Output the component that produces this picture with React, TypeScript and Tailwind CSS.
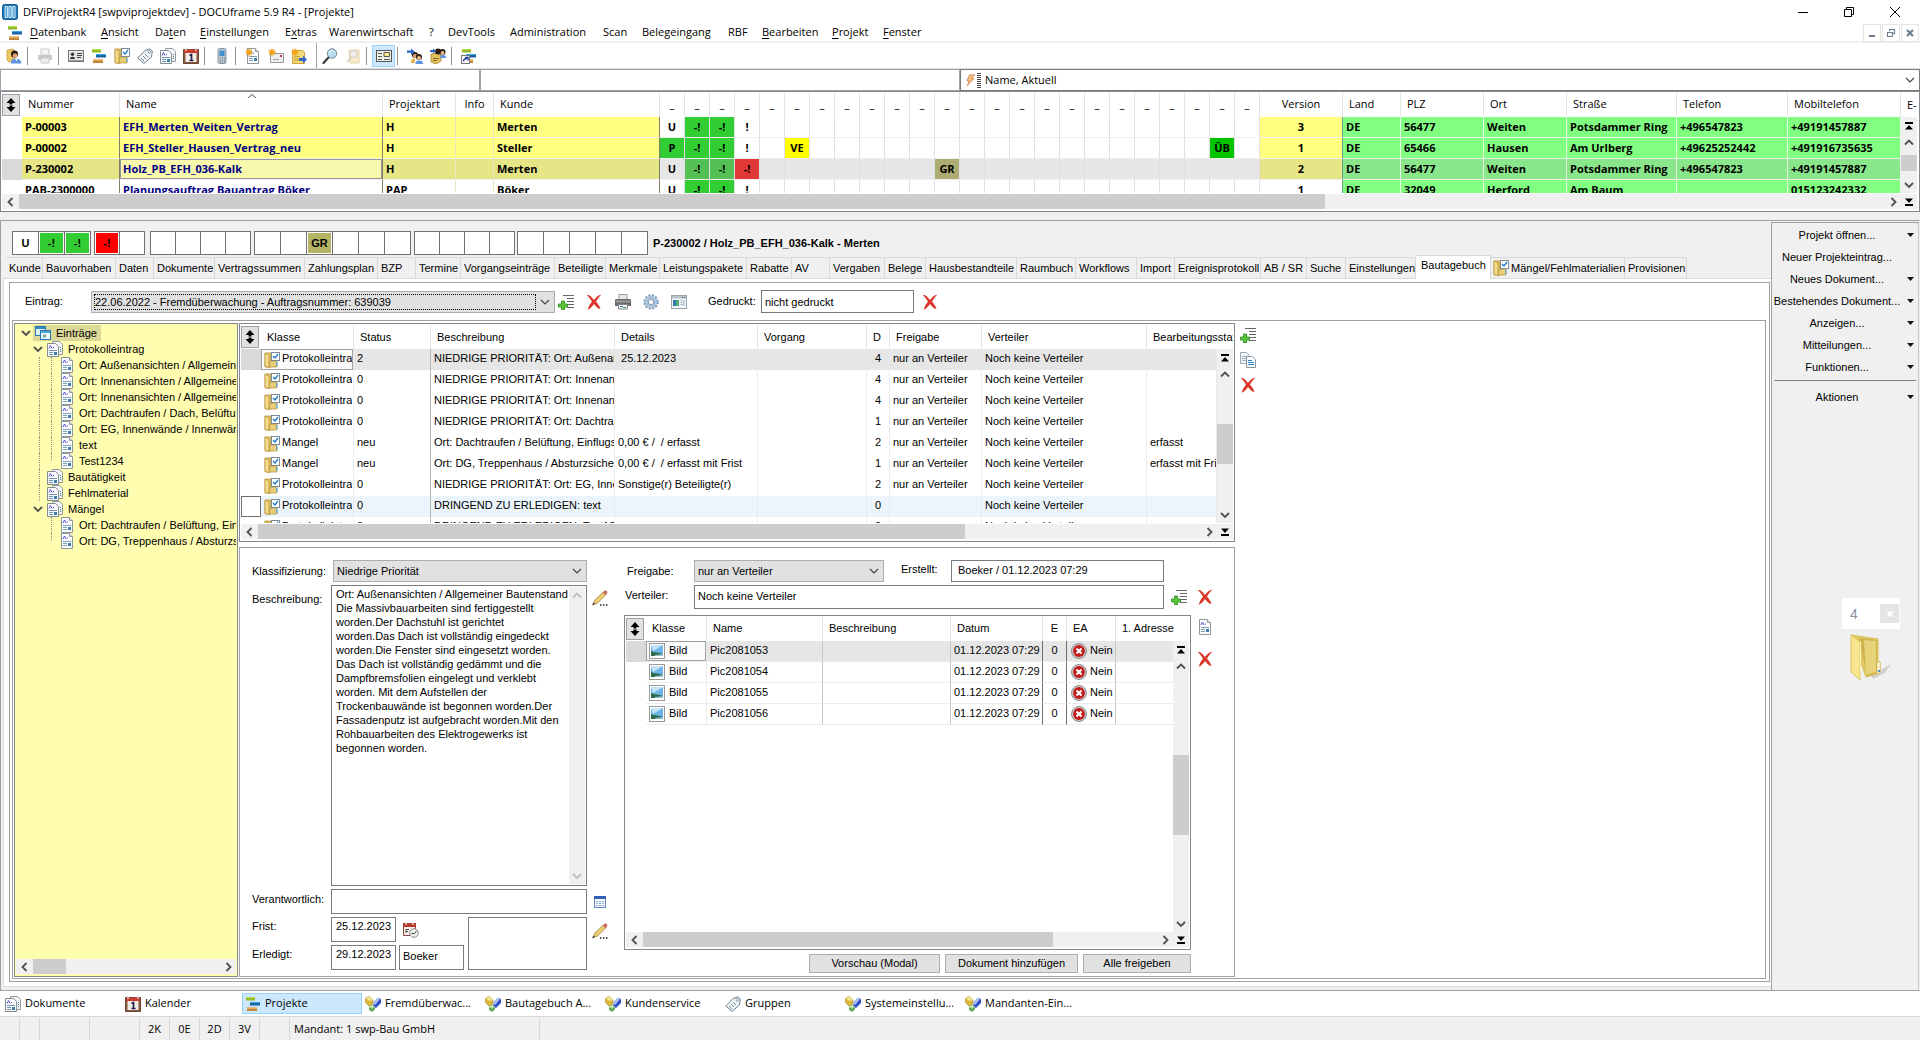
import type { ReactNode } from 'react';
import clsx from 'clsx';

const UI = "font-['Open_Sans','Noto_Sans',sans-serif]";
const SANS = "font-['Liberation_Sans',Arial,sans-serif]";

/* ---------- icons ---------- */

const PAGE = (
  <>
    <path d="M2.500 .5h8l3 3v12h-11z" fill="#fbfcfd" stroke="#8e979e" />
    <path d="M10.500 .5v3h3" fill="#dfe6ea" stroke="#8e979e" />
    <path d="M4 6l1.500-3L7 6M8 5h1" stroke="#5a4fd0" fill="none" />
    <path d="M4 8.500h8M4 10.500h4M4 12.500h4" stroke="#7d9fb0" />
    <path d="M9 10h3v3H9z" fill="#3d7fa8" />
  </>
);

const STAR = (
  <path
    d="M4 0l1 2.300L7.300 1 6.200 3.400 9 4 6.200 5 7.300 7.300 5 6.200 4 9 3 6.200 .7 7.300 1.800 5 0 4l1.800-.7L.7 1 3 2.200z"
    fill="#f2a51c"
  />
);

const BARS = (
  <>
    <path d="M1 1h9v3.500H1z" fill="#8fb92c" />
    <path d="M1 1h9v1.200H1z" fill="#b4dc3c" />
    <path d="M5 6h10v3.500H5z" fill="#1a5f9e" />
    <path d="M5 6h10v1.200H5z" fill="#35a3e0" />
    <path d="M2 11.500h10V15H2z" fill="#c2853a" />
    <path d="M2 11.500h10v1.200H2z" fill="#f0bd6c" />
  </>
);

const PEOPLE = (
  <>
    <circle cx="8" cy="7" r="3" fill="#2d1c12" />
    <circle cx="8" cy="8" r="2" fill="#e0a878" />
    <circle cx="12" cy="9" r="3" fill="#2d1c12" />
    <circle cx="12" cy="10" r="2" fill="#e8b88c" />
    <path d="M4 14c0-3 2-3.500 4-3.500V15H4z" fill="#e6b343" />
    <path d="M8.500 16c0-3 1.500-3.500 3.500-3.500s4 .5 4 3.500z" fill="#5f93e2" />
  </>
);

const icons: Record<string, ReactNode> = {
  app: (
    <>
      <rect x=".5" y=".5" width="15" height="15" rx="2" fill="#1c78b8" stroke="#135c92" />
      <path d="M3 2.500h2.500v11H3zM6.800 2.500h2.500v11H6.800zM10.600 2.500h2.500v11h-2.500z" fill="#5aa9dc" stroke="#e8f5fd" strokeWidth=".8" />
    </>
  ),
  gantt: BARS,
  userdb: (
    <>
      <path d="M1 2l6-1 2 2v10l-6 1-2-2z" fill="#ecc763" stroke="#c79a35" strokeWidth=".7" />
      <circle cx="8.500" cy="6" r="3.500" fill="#2c1b12" />
      <circle cx="9" cy="7.500" r="2.300" fill="#dda577" />
      <path d="M5 15.500c0-4 2-5 4.500-5s5.500 1 6 5z" fill="#5f93e2" />
      <path d="M9 10.500l1.500 3 1-3z" fill="#fff" />
    </>
  ),
  printerOff: (
    <>
      <path d="M4 1h8v6H4z" fill="#f6f6f6" stroke="#c8c8c8" />
      <path d="M1 7h14v5H1z" fill="#c9c9c9" />
      <path d="M4 10h8v5H4z" fill="#eee" stroke="#c8c8c8" />
    </>
  ),
  printer: (
    <>
      <path d="M4 .5h8V6H4z" fill="#e9e9e9" stroke="#9a9a9a" />
      <path d="M0 6c0-1 1-1 2-1h12c1 0 2 0 2 1v6H0z" fill="#6a6a6a" />
      <path d="M1 6.500h14v2H1z" fill="#9c9c9c" />
      <path d="M3.500 10.500h9V15h-9z" fill="#f4f4f4" stroke="#888" />
      <path d="M5 12.500h3" stroke="#2f7fc0" />
      <path d="M8 13.500h3" stroke="#4aa04a" />
    </>
  ),
  idcard: (
    <>
      <rect x=".5" y="2.500" width="15" height="11" fill="#e6e6e6" stroke="#777" />
      <circle cx="4.500" cy="6.300" r="1.700" fill="#333" />
      <path d="M2 11c0-3 5-3 5 0z" fill="#333" />
      <path d="M9 5.500h5M9 7.500h5M9 9.500h4" stroke="#444" />
      <path d="M1 12.500h14" stroke="#999" />
    </>
  ),
  folderCheck: (
    <>
      <path d="M1 1h6v14H1z" fill="#e5c466" stroke="#b28f35" strokeWidth=".7" />
      <path d="M1 1l4 2v13l-4-2z" fill="#f4dc8c" stroke="#b28f35" strokeWidth=".7" />
      <path d="M6 9h7v6H5z" fill="#e9cd77" stroke="#b28f35" strokeWidth=".7" />
      <path d="M12 10h1.500v4H12z" fill="#6aa9d6" />
      <rect x="7.500" y=".5" width="8" height="8" fill="#fff" stroke="#7b8c98" />
      <path d="M9 4l2 2 3-4" fill="none" stroke="#1c78c8" strokeWidth="1.300" />
    </>
  ),
  tag: (
    <>
      <path d="M8 2.500L13 .8l2.300 2.200-.8 6L7 15.500 .8 10z" fill="#eef3f7" stroke="#6f818e" />
      <circle cx="12.300" cy="3.800" r="1.300" fill="#fff" stroke="#6f818e" strokeWidth=".8" />
      <path d="M4 10l3 3M6 8l3 3M8 6l3 3" stroke="#77858f" />
    </>
  ),
  docs: (
    <>
      <path d="M5.500 .5h7l3 3v10h-10z" fill="#f3f5f6" stroke="#929aa0" />
      <path d="M.5 2.500h8l3 3v10H.5z" fill="#fbfcfd" stroke="#858d93" />
      <path d="M2 7.500L3.500 4.500 5 7.500M6 6.500h1" stroke="#5a4fd0" fill="none" />
      <path d="M2 9.500h8M2 11.500h4M2 13.500h4" stroke="#6f93a8" />
      <path d="M7 11h3v3H7z" fill="#3d7fa8" />
      <path d="M13 6.500h1M13 8.500h1M13 10.500h1" stroke="#3b7ea6" />
    </>
  ),
  calendar: (
    <>
      <path d="M.5 1.500h15v14H.5z" fill="#8a5a40" stroke="#6d4430" />
      <path d="M1 1.500h14V5H1z" fill="#c83e2e" />
      <path d="M3 0v3M13 0v3" stroke="#d8d8d8" strokeWidth="1.400" />
      <path d="M2.500 5h11v9h-11z" fill="#f3ece6" />
      <path d="M6.500 7.500L8.500 6.500v6M6.500 12.500h4" stroke="#1c1c50" strokeWidth="1.600" fill="none" />
    </>
  ),
  phone: (
    <>
      <rect x="4" y=".5" width="8" height="15" rx="1.500" fill="#bcc8d1" stroke="#8794a0" />
      <path d="M5.500 2.500h5V8h-5z" fill="#3f8ed0" />
      <path d="M6 10h1M8 10h1M10 10h1M6 12h1M8 12h1M10 12h1M6 14h1M8 14h1M10 14h1" stroke="#6b7883" />
    </>
  ),
  newDoc: (
    <>
      {PAGE}
      {STAR}
    </>
  ),
  newMail: (
    <>
      <path d="M2.500 5.500h13v9h-13z" fill="#eee" stroke="#999" />
      <path d="M12 7h2v2h-2z" fill="#cf3b3b" />
      <path d="M5 11.500h6" stroke="#aaa" />
      {STAR}
    </>
  ),
  pageArrow: (
    <>
      <path d="M1.500 2.500h10l2 2v11h-12z" fill="#f3d978" stroke="#cda53c" />
      <path d="M3 8.500h6M3 10.500h5M3 12.500h5" stroke="#c79f38" />
      <path d="M8 10h4V7.500l4 4-4 4V13H8z" fill="#3464c8" />
      {STAR}
    </>
  ),
  lens: (
    <>
      <path d="M6.500 9.500l-5 5.500" stroke="#3c3c3c" strokeWidth="2.200" strokeLinecap="round" />
      <circle cx="10" cy="5.500" r="4.700" fill="#b9dcf3" stroke="#6f8797" />
      <path d="M7.500 5c0-2 1.500-2.500 3-2.500" stroke="#fff" fill="none" />
    </>
  ),
  findPage: (
    <>
      <path d="M4 2h10v13H5z" fill="#f8e9c8" stroke="#e6d3a6" />
      <circle cx="8.500" cy="6" r="3.500" fill="#f1f1ee" stroke="#ccc" />
      <path d="M6 9l-4 5" stroke="#d5cfc0" strokeWidth="1.500" />
    </>
  ),
  form: (
    <>
      <rect x=".5" y="2.500" width="15" height="11" fill="#eef0e4" stroke="#555" />
      <path d="M2 5.500h4M2 8.500h4M2 11.500h4M8 11.500h6" stroke="#555" />
      <path d="M8 4.500h5.500v4H8z" fill="#f5e98a" stroke="#555" />
    </>
  ),
  users: (
    <>
      {PEOPLE}
      <path d="M0 2.500h4V.5l4 3.200-4 3.200V4.800H0z" fill="#2c66c9" />
    </>
  ),
  usersFolder: (
    <>
      <path d="M1 6l7-1 3 2v6l-5 3-5-2z" fill="#e3c05c" stroke="#a68432" strokeWidth=".8" />
      <circle cx="8" cy="3.500" r="3" fill="#2d1c12" />
      <circle cx="12.500" cy="4" r="3" fill="#2d1c12" />
      <circle cx="12.500" cy="5" r="1.900" fill="#e8b88c" />
      <path d="M10 10c0-2.500 1-3 3-3s3 1 3 3z" fill="#5f93e2" />
      <path d="M3 10.500h6M3 12.500h4" stroke="#8c6c22" />
      <path d="M0 2h3V.5l3 2.500-3 2.500V4H0z" fill="#2c66c9" />
    </>
  ),
  shortcut: (
    <>
      {BARS}
      <rect x=".5" y="7.500" width="8" height="8" fill="#fff" stroke="#777" />
      <path d="M2.500 13.500c0-2 1-3 3.500-3M4 9.500h3v3" stroke="#1c3f96" strokeWidth="1.400" fill="none" />
    </>
  ),
  bolt: (
    <path d="M6 1h7l-4 5h3L3 15.500 5.500 9H2.500z" fill="#f7c07c" stroke="#b5562a" strokeWidth=".7" />
  ),
  addList: (
    <>
      <path d="M5 1.500h11M9 4.500h7M9 7.500h7M9 10.500h7M9 13.500h7" stroke="#666" />
      <path d="M3.500 7h3v3h3v3h-3v3h-3v-3h-3v-3h3z" fill="#58c43a" stroke="#2c8a1c" strokeWidth=".8" />
    </>
  ),
  redX: (
    <path
      d="M.8 1C3.500 .6 5 2 8 6c2-3 4.500-5 7.500-5.500-3 3-4.500 5-5.500 7.300 2 2 3.500 4 4.500 7.200-3-.3-4.500-2.500-6.500-5C6.500 12 4.500 15 1.700 15.800c.8-3.300 2.300-5.800 4.300-8.300C4.300 5 2.800 3 .8 1z"
      fill="#d8372a"
    />
  ),
  gear: (
    <>
      <circle cx="8" cy="8" r="6.500" fill="none" stroke="#7f9cb8" strokeWidth="2.400" strokeDasharray="2.200 1.200" />
      <circle cx="8" cy="8" r="4.500" fill="none" stroke="#a9c2da" strokeWidth="3.200" />
      <circle cx="8" cy="8" r="2.700" fill="#fff" stroke="#7f9cb8" />
    </>
  ),
  windowApp: (
    <>
      <rect x=".5" y="1.500" width="15" height="13" fill="#f4f7f9" stroke="#98a4ae" />
      <path d="M1 2h14v2.500H1z" fill="#b8c4ce" />
      <path d="M11 3.500h1M13 3.500h1" stroke="#445" />
      <path d="M2 6h6v6H2z" fill="#2c7fae" />
      <path d="M5 6h3v6H5z" fill="#55a878" />
      <path d="M9.500 6.500h2M9.500 8.500h2M9.500 10.500h2M13 6v6" stroke="#9ab" />
    </>
  ),
  windows: (
    <>
      <rect x=".5" y="1.500" width="10" height="9" fill="#dff0fb" stroke="#2a78ad" />
      <path d="M1 2h9v2H1z" fill="#2f8ac6" />
      <rect x="5.500" y="5.500" width="10" height="9" fill="#eaf6fd" stroke="#2a78ad" />
      <path d="M6 6h9v2H6z" fill="#4fa5d8" />
      <path d="M8 9.500h3v3H8z" fill="#7fa7a0" />
    </>
  ),
  doc: PAGE,
  copy: (
    <>
      <path d="M.5 .5h6l3 3v8h-9z" fill="#f3f6f8" stroke="#9aa7b0" />
      <path d="M2 4.500h4M2 6.500h5M2 8.500h4" stroke="#8fb4cc" />
      <path d="M6.500 4.500h6l3 3v8h-9z" fill="#f9fbfc" stroke="#8794a0" />
      <path d="M8 8.500h4M8 10.500h6M8 12.500h6" stroke="#2f83c4" />
    </>
  ),
  pencil: (
    <>
      <path d="M1 14.500L3 10 11.500 2l2.500 2.500L5.500 13z" fill="#f0d070" stroke="#9a7b32" strokeWidth=".8" />
      <path d="M11 2.500L13 .8c1-.6 2.600.9 2 2L13.500 5z" fill="#e0685a" stroke="#9c6a64" strokeWidth=".6" />
      <path d="M0 15.500l1.500-3 1.500 1.500z" fill="#333" />
      <path d="M8 15h1.500M11 15h1.500M14 15h1.500" stroke="#222" strokeWidth="1.500" />
    </>
  ),
  calTable: (
    <>
      <rect x="2.500" y="2.500" width="11" height="11" fill="#f5f9fe" stroke="#5f86c4" />
      <path d="M2 2h12v3H2z" fill="#2f62b8" />
      <path d="M4 7.500h8M4 9.500h8M4 11.500h8" stroke="#8fb0dc" strokeDasharray="2 1" />
    </>
  ),
  calClock: (
    <>
      <path d="M.5 1.500h12v12H.5z" fill="#f6efec" stroke="#8d4a40" />
      <path d="M0 1h13v4H0z" fill="#b53a31" />
      <path d="M3 0v3M10 0v3" stroke="#ddd" strokeWidth="1.300" />
      <path d="M3 7v4M3 7.500h3M3 9.500h2" stroke="#555" />
      <circle cx="11" cy="11" r="4.300" fill="#efefec" stroke="#8d8d86" />
      <path d="M8.500 11.500h3L13.500 9" stroke="#444" fill="none" />
    </>
  ),
  picture: (
    <>
      <rect x=".5" y=".5" width="15" height="15" fill="#fff" stroke="#999" />
      <path d="M2 2h12v11H2z" fill="#6db4e8" />
      <path d="M2 2h12L4 8z" fill="#c5e4f8" />
      <path d="M2 8c3 2 8 1 12 3v2H2z" fill="#2c6b46" />
      <path d="M6 12l8-1v2H6z" fill="#8fc0d8" />
    </>
  ),
  error: (
    <>
      <circle cx="8" cy="8" r="7.500" fill="#c9c9c9" stroke="#777" strokeWidth=".8" />
      <circle cx="8" cy="8" r="5.900" fill="#c41a1a" />
      <path d="M5.500 5.500l5 5M10.500 5.500l-5 5" stroke="#fff" strokeWidth="2.200" />
    </>
  ),
  cubes: (
    <>
      <path d="M4 .5L8 4 7 9 4 10 0 6 1 2z" fill="#dcb93c" stroke="#9c7f22" strokeWidth=".6" />
      <path d="M4 .5L8 4 4 5 1 2z" fill="#f7e48e" />
      <path d="M13 2l3 1v4l-5 5-3-2 .5-4z" fill="#3450c8" />
      <path d="M13 2l2 1-5 6-2-1 .5-2z" fill="#a9c0f4" />
      <path d="M7 9.500l3 1v3L7 16l-3-2v-3z" fill="#6aa85a" />
      <path d="M7 9.500l3 1-3 2-3-1.500z" fill="#c6e8ba" />
    </>
  ),
};

function Icon({ name, className }: { name: string; className?: string }) {
  return (
    <svg viewBox="0 0 16 16" className={clsx('h-4 shrink-0', className ?? 'w-4')} aria-hidden="true">
      {icons[name]}
    </svg>
  );
}

type ChevronProps = { dir: 'up' | 'down' | 'left' | 'right'; className?: string; thin?: boolean };

function Chevron({ dir, className, thin }: ChevronProps) {
  const paths = {
    up: 'M1 6.500L5 2.500l4 4',
    down: 'M1 3l4 4 4-4',
    left: 'M6.500 1l-4 4 4 4',
    right: 'M3.500 1l4 4-4 4',
  };
  return (
    <svg viewBox="0 0 10 10" className={clsx('size-2.5 shrink-0', className ?? 'text-[#505050]')} aria-hidden="true">
      <path d={paths[dir]} fill="none" stroke="currentColor" strokeWidth={thin ? 1.1 : 1.8} />
    </svg>
  );
}

function EndMark({ top }: { top?: boolean }) {
  return (
    <svg viewBox="0 0 8 8" className="size-2 shrink-0" aria-hidden="true">
      <path d={top ? 'M0 0h8v2H0zM4 3l4 4.500H0z' : 'M0 6h8v2H0zM4 5L0 .5h8z'} fill="#000" />
    </svg>
  );
}

/* ---------- shared controls ---------- */

function IconButton({ name, label, className }: { name: string; label: string; className?: string }) {
  return (
    <button type="button" aria-label={label} className={clsx('flex size-4 items-center justify-center', className)}>
      <Icon name={name} />
    </button>
  );
}

type ScrollProps = { parts: [number, number, number]; ends?: boolean };

function HScroll({ parts, ends }: ScrollProps) {
  const [before, size, after] = parts;
  return (
    <div className="flex h-[15px] shrink-0 items-center bg-[#f0f0f0]">
      <span className="flex w-[17px] justify-center">
        <Chevron dir="left" />
      </span>
      <span className="flex h-full flex-1">
        <span style={{ flexGrow: before }} />
        <span className="bg-[#cdcdcd]" style={{ flexGrow: size }} />
        <span style={{ flexGrow: after }} />
      </span>
      <span className="flex w-[17px] justify-center">
        <Chevron dir="right" />
      </span>
      {ends && (
        <span className="flex w-4 justify-center">
          <EndMark />
        </span>
      )}
    </div>
  );
}

function VScroll({ parts, ends, disabled }: ScrollProps & { disabled?: boolean }) {
  const [before, size, after] = parts;
  const tone = disabled ? 'text-[#bfbfbf]' : 'text-[#505050]';
  return (
    <div className="flex min-h-0 w-4 flex-1 flex-col items-center bg-[#f0f0f0]">
      {ends && (
        <span className="flex h-[17px] items-center">
          <EndMark top />
        </span>
      )}
      <span className="flex h-[17px] items-center">
        <Chevron dir="up" className={tone} />
      </span>
      <span className="flex min-h-0 w-full flex-1 flex-col">
        <span style={{ flexGrow: before }} />
        <span className="bg-[#cdcdcd]" style={{ flexGrow: size }} />
        <span style={{ flexGrow: after }} />
      </span>
      <span className="flex h-[17px] items-center">
        <Chevron dir="down" className={tone} />
      </span>
    </div>
  );
}

function Sorter() {
  return (
    <button
      type="button"
      aria-label="Zeilenhöhe"
      className="flex h-[22px] w-[18px] items-center justify-center border border-[#a0a0a0] bg-[#e1e1e1]"
    >
      <svg viewBox="0 0 10 14" className="h-3.5 w-2.5" aria-hidden="true">
        <path d="M5 0l4.500 5h-3v4h3L5 14 .5 9h3V5h-3z" fill="#000" />
        <path d="M.5 7h9" stroke="#e1e1e1" />
      </svg>
    </button>
  );
}

function Dropdown({ id, value, className, focus }: { id: string; value: string; className?: string; focus?: boolean }) {
  return (
    <span className={clsx('relative flex h-[22px] shrink-0 items-center border border-[#adadad] bg-[#e1e1e1]', className)}>
      <select
        id={id}
        className={clsx(
          'h-4 flex-1 appearance-none',
          focus ? 'ml-[2px] mr-[18px] border border-dotted border-black leading-[14px]' : 'pl-[3px] leading-4',
        )}
      >
        <option>{value}</option>
      </select>
      <Chevron dir="down" thin className="pointer-events-none absolute right-1 text-[#404040]" />
    </span>
  );
}

const FIELD = 'border border-[#7a7a7a] bg-white outline-none';

/* ---------- window chrome ---------- */

const menu: { text: string; key?: number; width: string }[] = [
  { text: 'Datenbank', key: 0, width: 'w-[71px]' },
  { text: 'Ansicht', key: 0, width: 'w-[54px]' },
  { text: 'Daten', key: 2, width: 'w-[45px]' },
  { text: 'Einstellungen', key: 0, width: 'w-[85px]' },
  { text: 'Extras', key: 1, width: 'w-[44px]' },
  { text: 'Warenwirtschaft', width: 'w-[100px]' },
  { text: '?', width: 'w-[19px]' },
  { text: 'DevTools', width: 'w-[62px]' },
  { text: 'Administration', width: 'w-[93px]' },
  { text: 'Scan', width: 'w-[39px]' },
  { text: 'Belegeingang', width: 'w-[86px]' },
  { text: 'RBF', width: 'w-[34px]' },
  { text: 'Bearbeiten', key: 0, width: 'w-[70px]' },
  { text: 'Projekt', key: 0, width: 'w-[51px]' },
  { text: 'Fenster', key: 0, width: 'w-[50px]' },
];

function TitleBar() {
  return (
    <header className="flex h-6 shrink-0 items-center pl-[2px]">
      <Icon name="app" />
      <h1 className="ml-[5px] flex-1">DFViProjektR4 [swpviprojektdev] - DOCUframe 5.9 R4 - [Projekte]</h1>
      <button type="button" aria-label="Minimieren" className="flex w-[46px] justify-center">
        <svg viewBox="0 0 10 10" className="size-2.5" stroke="#000">
          <path d="M0 5.500h10" />
        </svg>
      </button>
      <button type="button" aria-label="Verkleinern" className="flex w-[46px] justify-center">
        <svg viewBox="0 0 10 10" className="size-2.5" stroke="#000" fill="none">
          <path d="M.5 2.500h7v7h-7zM2.500 2.500v-2h7v7h-2" />
        </svg>
      </button>
      <button type="button" aria-label="Schließen" className="mr-[2px] flex w-[46px] justify-center">
        <svg viewBox="0 0 10 10" className="size-2.5" stroke="#000">
          <path d="M0 0l10 10M10 0L0 10" />
        </svg>
      </button>
    </header>
  );
}

function MenuBar() {
  const box = 'flex size-[18px] items-center justify-center border border-[#e5e5e5] text-[#6d7f92]';
  return (
    <nav className="flex h-[19px] shrink-0 items-center border-b-2 border-[#f0f0f0] pl-[7px]">
      <Icon name="gantt" />
      <span className="w-[7px]" />
      {menu.map(({ text, key, width }) => (
        <button key={text} type="button" className={clsx('text-left whitespace-nowrap', width)}>
          {key === undefined ? (
            text
          ) : (
            <>
              {text.slice(0, key)}
              <u className="underline-offset-2">{text[key]}</u>
              {text.slice(key + 1)}
            </>
          )}
        </button>
      ))}
      <span className="flex-1" />
      <span className="flex gap-px pr-px">
        <button type="button" aria-label="Fenster minimieren" className={box}>
          <svg viewBox="0 0 10 10" className="size-2.5">
            <path d="M2 7h6v2H2z" fill="currentColor" />
          </svg>
        </button>
        <button type="button" aria-label="Fenster wiederherstellen" className={box}>
          <svg viewBox="0 0 10 10" className="size-2.5" fill="none" stroke="currentColor">
            <path d="M1.500 4.500h5v4h-5zM3.500 3V1.500h5v4H7" strokeWidth="1.200" />
          </svg>
        </button>
        <button type="button" aria-label="Fenster schließen" className={box}>
          <svg viewBox="0 0 10 10" className="size-2.5" stroke="currentColor" strokeWidth="2.200">
            <path d="M2 2l6 6M8 2L2 8" />
          </svg>
        </button>
      </span>
    </nav>
  );
}

const toolbar = [
  ['userdb', 'Benutzer'],
  ['|', ''],
  ['printerOff', 'Drucken'],
  ['|', ''],
  ['idcard', 'Adressen'],
  ['gantt', 'Projekte'],
  ['folderCheck', 'Vorgänge'],
  ['tag', 'Gruppen'],
  ['docs', 'Dokumente'],
  ['calendar', 'Kalender'],
  ['|', ''],
  ['phone', 'Telefon'],
  ['|', ''],
  ['newDoc', 'Neues Dokument'],
  ['newMail', 'Neue Mail'],
  ['pageArrow', 'Neue Notiz'],
  ['||', ''],
  ['lens', 'Suchen'],
  ['findPage', 'Suche im Ordner'],
  ['|', ''],
  ['form', 'Formular'],
  ['|', ''],
  ['users', 'Verteiler'],
  ['usersFolder', 'Mappe'],
  ['|', ''],
  ['shortcut', 'Verknüpfung'],
];

function Toolbar() {
  return (
    <div className="flex h-[26px] shrink-0 items-center border-b border-[#dcdcdc] pl-[2px]">
      {toolbar.map(([name, label], i) => {
        if (name === '|') {
          return <span key={i} className="ml-[2px] mr-[5px] h-[18px] w-px bg-[#8f8f8f]" />;
        }
        if (name === '||') {
          return <span key={i} className="ml-[6px] mr-px h-full w-px bg-[#a0a0a0]" />;
        }
        return (
          <button
            key={i}
            type="button"
            aria-label={label}
            className={clsx(
              'flex h-[22px] w-[23px] items-center justify-center',
              name === 'form' && 'border border-[#99d1ff] bg-[#cce8ff]',
            )}
          >
            <Icon name={name} />
          </button>
        );
      })}
    </div>
  );
}

function SearchRow() {
  return (
    <div className="flex h-[22px] shrink-0">
      <input aria-label="Suche Nummer" className="w-1/4 border border-[#a0a0a5] outline-none" />
      <input aria-label="Suche Name" className="w-1/4 border border-[#a0a0a5] outline-none" />
      <div className="relative flex w-1/2 items-center border border-[#7a7a7a] pl-1">
        <Icon name="bolt" className="w-3" />
        <svg viewBox="0 0 4 15" className="h-[15px] w-1" aria-hidden="true">
          <path d="M0 .5h4M0 2.500h4M0 4.500h4M0 6.500h4M0 8.500h4M0 10.500h4M0 12.500h4M0 14.500h4" stroke="#444" />
        </svg>
        <select aria-label="Sortierung" className="ml-1 flex-1 appearance-none">
          <option>Name, Aktuell</option>
        </select>
        <Chevron dir="down" thin className="pointer-events-none absolute right-1 text-[#404040]" />
      </div>
    </div>
  );
}

/* ---------- project list ---------- */

const STATE_COUNT = 24;

const tones: Record<string, string> = {
  green: 'bg-[#32cd32]',
  greenSel: 'bg-[#55c155]',
  redSel: 'bg-[#e03737]',
  yellow: 'bg-[#ffff00]',
  olive: 'bg-[#acac73]',
  deep: 'bg-[#00c400]',
};

type Project = {
  no: string;
  name: string;
  kind: string;
  customer: string;
  states: Record<number, [string, string?]>;
  rest: string[];
  plain?: boolean;
  selected?: boolean;
};

const projects: Project[] = [
  {
    no: 'P-00003',
    name: 'EFH_Merten_Weiten_Vertrag',
    kind: 'H',
    customer: 'Merten',
    states: { 0: ['U'], 1: ['-!', 'green'], 2: ['-!', 'green'], 3: ['!'] },
    rest: ['3', 'DE', '56477', 'Weiten', 'Potsdammer Ring', '+496547823', '+49191457887'],
  },
  {
    no: 'P-00002',
    name: 'EFH_Steller_Hausen_Vertrag_neu',
    kind: 'H',
    customer: 'Steller',
    states: {
      0: ['P', 'green'],
      1: ['-!', 'green'],
      2: ['-!', 'green'],
      3: ['!'],
      5: ['VE', 'yellow'],
      22: ['ÜB', 'deep'],
    },
    rest: ['1', 'DE', '65466', 'Hausen', 'Am Urlberg', '+49625252442', '+491916735635'],
  },
  {
    no: 'P-230002',
    name: 'Holz_PB_EFH_036-Kalk',
    kind: 'H',
    customer: 'Merten',
    states: { 0: ['U'], 1: ['-!', 'greenSel'], 2: ['-!', 'greenSel'], 3: ['-!', 'redSel'], 11: ['GR', 'olive'] },
    rest: ['2', 'DE', '56477', 'Weiten', 'Potsdammer Ring', '+496547823', '+49191457887'],
    selected: true,
  },
  {
    no: 'PAB-2300000',
    name: 'Planungsauftrag Bauantrag Böker',
    kind: 'PAP',
    customer: 'Böker',
    states: { 0: ['U'], 1: ['-!', 'green'], 2: ['-!', 'green'], 3: ['!'] },
    rest: ['1', 'DE', '32049', 'Herford', 'Am Baum', '', '015123242332'],
    plain: true,
  },
];

function ProjectRow({ project }: { project: Project }) {
  const { no, name, kind, customer, states, rest, plain, selected } = project;
  const left = plain ? 'bg-white' : selected ? 'bg-[#e6e686]' : 'bg-[#ffff80]';
  const right = selected ? 'bg-[#8ae68a]' : 'bg-[#80ff80]';
  const cell = 'h-[21px] border-b border-r border-b-[#f0f0f0] p-0 whitespace-nowrap leading-5';
  const [version, ...address] = rest;

  return (
    <tr>
      <td className={clsx('h-[21px] p-0', selected && 'bg-[#d9d9d9]')} />
      <td className={clsx(cell, left, 'border-r-[#80806a] pl-[3px]')}>{no}</td>
      <td className={clsx(cell, 'border-r-[#80806a] text-[#000080]', left)}>
        {selected ? (
          <div className="h-5 border border-[#989898] bg-[#f9f9ae] pl-[2px] leading-[18px]">{name}</div>
        ) : (
          <div className="pl-[3px]">{name}</div>
        )}
      </td>
      <td className={clsx(cell, left, 'border-r-[#e8e8c0] pl-[3px]')}>{kind}</td>
      <td className={clsx(cell, left, 'border-r-[#e8e8c0]')} />
      <td className={clsx(cell, left, 'border-r-[#80806a] pl-[3px]')}>{customer}</td>
      {Array.from({ length: STATE_COUNT }, (_, i) => {
        const [text, tone] = states[i] ?? [''];
        return (
          <td
            key={i}
            className={clsx(cell, 'border-r-[#e0e0e6] text-center', tone ? tones[tone] : selected && 'bg-[#e6e6e6]')}
          >
            {text}
          </td>
        );
      })}
      <td className={clsx(cell, left, 'border-r-[#6d9a8a] text-center')}>{version}</td>
      {address.map((text, i) => (
        <td key={i} className={clsx(cell, right, 'border-r-[#e6f5e6] pl-[3px]')}>
          {text}
        </td>
      ))}
    </tr>
  );
}

function ProjectList() {
  const th = 'h-[25px] border-r border-[#e5e5e5] p-0 pl-[6px] text-left font-normal whitespace-nowrap';
  return (
    <section className="flex h-[121px] shrink-0 flex-col border border-[#828790] pb-[2px] pl-px pr-[2px]">
      <div className="mb-px flex min-h-0 flex-1 overflow-hidden">
        <div className="relative min-w-0 flex-1">
          <table className="w-full table-fixed border-separate border-spacing-0">
            <colgroup>
              <col className="w-5" />
              <col className="w-[98px]" />
              <col className="w-[263px]" />
              <col className="w-[73px]" />
              <col className="w-[38px]" />
              <col className="w-[166px]" />
              {Array.from({ length: STATE_COUNT }, (_, i) => (
                <col key={i} className="w-[25px]" />
              ))}
              <col className="w-[83px]" />
              <col className="w-[58px]" />
              <col className="w-[83px]" />
              <col className="w-[83px]" />
              <col className="w-[110px]" />
              <col className="w-[111px]" />
              <col />
            </colgroup>
            <thead>
              <tr>
                <th className="p-0">
                  <Sorter />
                </th>
                <th className={th}>Nummer</th>
                <th className={th}>Name</th>
                <th className={th}>Projektart</th>
                <th className="border-r border-[#e5e5e5] p-0 text-center font-normal">Info</th>
                <th className={th}>Kunde</th>
                {Array.from({ length: STATE_COUNT }, (_, i) => (
                  <th key={i} className="border-r border-[#e5e5e5] p-0 text-center">
                    _
                  </th>
                ))}
                <th className="border-r border-[#e5e5e5] p-0 text-center font-normal">Version</th>
                {['Land', 'PLZ', 'Ort', 'Straße', 'Telefon', 'Mobiltelefon'].map((text) => (
                  <th key={text} className={th}>
                    {text}
                  </th>
                ))}
              </tr>
            </thead>
            <tbody className="font-bold">
              {projects.map((project) => (
                <ProjectRow key={project.no} project={project} />
              ))}
            </tbody>
          </table>
          <svg viewBox="0 0 8 4" className="absolute left-[246px] top-[2px] h-1 w-2" aria-hidden="true">
            <path d="M0 4l4-3.500L8 4" fill="none" stroke="#555" />
          </svg>
        </div>
        <div className="flex w-4 shrink-0 flex-col">
          <div className="h-[25px] overflow-hidden pl-[6px] leading-[25px]">E-</div>
          <VScroll parts={[4, 17, 5]} ends />
        </div>
      </div>
      <HScroll parts={[0, 70, 30]} ends />
    </section>
  );
}

/* ---------- project header and tabs ---------- */

type Chip = [string, string?];
const none: Chip = [''];

const chipGroups: { chips: Chip[]; width: string; gap: string }[] = [
  { chips: [['U'], ['-!', 'bg-[#32cd32]'], ['-!', 'bg-[#32cd32]']], width: 'w-[27px]', gap: 'mr-[3px]' },
  { chips: [['-!', 'bg-[#ff0000]'], none], width: 'w-[26px]', gap: 'mr-[5px]' },
  { chips: [none, none, none, none], width: 'w-[26px]', gap: 'mr-[3px]' },
  { chips: [none, none, ['GR', 'bg-[#b4b464]'], none, none, none], width: 'w-[27px]', gap: 'mr-[3px]' },
  { chips: [none, none, none, none], width: 'w-[26px]', gap: 'mr-[2px]' },
  { chips: [none, none, none, none, none], width: 'w-[27px]', gap: 'mr-[5px]' },
];

function StatusChips() {
  return (
    <div className="flex h-6 shrink-0 items-center pl-[11px] font-bold">
      {chipGroups.map(({ chips, width, gap }, g) => (
        <div key={g} className={clsx('flex', gap)}>
          {chips.map(([text, tone], i) => (
            <span
              key={i}
              className={clsx('flex h-6 border border-[#707070] bg-white p-px', width, i > 0 && '-ml-px')}
            >
              <span className={clsx('flex flex-1 items-center justify-center', tone)}>{text}</span>
            </span>
          ))}
        </div>
      ))}
      <h2>P-230002 / Holz_PB_EFH_036-Kalk - Merten</h2>
    </div>
  );
}

const tabs: [string, string][] = [
  ['Kunde', 'w-[37px]'],
  ['Bauvorhaben', 'w-[73px]'],
  ['Daten', 'w-[38px]'],
  ['Dokumente', 'w-[61px]'],
  ['Vertragssummen', 'w-[90px]'],
  ['Zahlungsplan', 'w-[73px]'],
  ['BZP', 'w-[38px]'],
  ['Termine', 'w-[45px]'],
  ['Vorgangseinträge', 'w-[94px]'],
  ['Beteiligte', 'w-[51px]'],
  ['Merkmale', 'w-[54px]'],
  ['Leistungspakete', 'w-[87px]'],
  ['Rabatte', 'w-[45px]'],
  ['AV', 'w-[38px]'],
  ['Vergaben', 'w-[55px]'],
  ['Belege', 'w-[41px]'],
  ['Hausbestandteile', 'w-[91px]'],
  ['Raumbuch', 'w-[59px]'],
  ['Workflows', 'w-[61px]'],
  ['Import', 'w-[38px]'],
  ['Ereignisprotokoll', 'w-[86px]'],
  ['AB / SR', 'w-[46px]'],
  ['Suche', 'w-[39px]'],
  ['Einstellungen', 'w-[70px]'],
  ['Bautagebuch', 'w-[75px]'],
  ['Mängel/Fehlmaterialien', 'w-[134px]'],
  ['Provisionen', 'w-[62px]'],
];

function TabStrip() {
  return (
    <div role="tablist" className="ml-[2px] flex h-6 shrink-0 items-end border-b border-[#dcdcdc] pl-[3px]">
      {tabs.map(([text, width]) => {
        const active = text === 'Bautagebuch';
        const withIcon = text.startsWith('Mängel');
        return (
          <button
            key={text}
            type="button"
            role="tab"
            aria-selected={active}
            className={clsx(
              'flex shrink-0 items-center justify-start border-r border-t border-[#d9d9d9] whitespace-nowrap',
              width,
              active ? '-mb-px h-6 bg-white pb-1 pl-[5px]' : 'h-[21px]',
              !active && (withIcon ? 'gap-[2px] pl-[2px]' : 'pl-[3px]'),
            )}
          >
            {withIcon && <Icon name="folderCheck" />}
            {text}
          </button>
        );
      })}
    </div>
  );
}

/* ---------- diary page ---------- */

function EntryBar() {
  return (
    <div className="flex h-[37px] shrink-0 items-center pl-[13px]">
      <label htmlFor="entry" className="w-[66px]">
        Eintrag:
      </label>
      <Dropdown id="entry" value="22.06.2022 - Fremdüberwachung - Auftragsnummer: 639039" className="w-[464px]" focus />
      <IconButton name="addList" label="Eintrag hinzufügen" className="ml-[3px]" />
      <IconButton name="redX" label="Eintrag löschen" className="ml-3" />
      <IconButton name="printer" label="Drucken" className="ml-[13px]" />
      <IconButton name="gear" label="Einstellungen" className="ml-3" />
      <IconButton name="windowApp" label="Ansicht" className="ml-3" />
      <label htmlFor="printed" className="ml-[21px] w-[53px]">
        Gedruckt:
      </label>
      <input id="printed" defaultValue="nicht gedruckt" className={clsx(FIELD, 'h-[23px] w-[153px] pl-[3px]')} />
      <IconButton name="redX" label="Gedruckt zurücksetzen" className="ml-2" />
    </div>
  );
}

type Node = { text: string; icon: string; level: 0 | 1 | 2; open?: boolean; last?: boolean; trunk?: boolean };

const tree: Node[] = [
  { text: 'Einträge', icon: 'windows', level: 0, open: true },
  { text: 'Protokolleintrag', icon: 'docs', level: 1, open: true },
  { text: 'Ort: Außenansichten / Allgemein', icon: 'doc', level: 2, trunk: true },
  { text: 'Ort: Innenansichten / Allgemeine', icon: 'doc', level: 2, trunk: true },
  { text: 'Ort: Innenansichten / Allgemeine', icon: 'doc', level: 2, trunk: true },
  { text: 'Ort: Dachtraufen / Dach, Belüftu', icon: 'doc', level: 2, trunk: true },
  { text: 'Ort: EG, Innenwände / Innenwär', icon: 'doc', level: 2, trunk: true },
  { text: 'text', icon: 'doc', level: 2, trunk: true },
  { text: 'Test1234', icon: 'doc', level: 2, trunk: true, last: true },
  { text: 'Bautätigkeit', icon: 'docs', level: 1 },
  { text: 'Fehlmaterial', icon: 'docs', level: 1 },
  { text: 'Mängel', icon: 'docs', level: 1, open: true },
  { text: 'Ort: Dachtraufen / Belüftung, Ein', icon: 'doc', level: 2 },
  { text: 'Ort: DG, Treppenhaus / Absturzs', icon: 'doc', level: 2, last: true },
];

function TreeRow({ node }: { node: Node }) {
  const { text, icon, level, open, last, trunk } = node;
  return (
    <li className="flex h-4 items-center whitespace-nowrap">
      {level > 0 && <span className="w-3 shrink-0" />}
      {level === 2 && (
        <span
          className={clsx(
            'ml-[9px] h-full w-3 shrink-0 border-l border-dotted',
            trunk ? 'border-[#909080]' : 'border-transparent',
          )}
        />
      )}
      {open ? (
        <span className="flex w-[15px] shrink-0 justify-center">
          <Chevron dir="down" />
        </span>
      ) : (
        <span
          className={clsx(
            'shrink-0 border-l border-dotted border-[#909080]',
            last ? 'mb-2 h-2' : 'h-full',
            level === 1 ? 'ml-[9px] w-[6px]' : 'w-[8px]',
          )}
        />
      )}
      {level === 0 ? (
        <span className="flex items-center gap-[5px] bg-[#dbd898] pl-[2px] pr-1">
          <Icon name={icon} />
          {text}
        </span>
      ) : (
        <span className={clsx('flex items-center', level === 1 ? 'gap-[5px] pl-[2px]' : 'gap-1')}>
          <Icon name={icon} />
          {text}
        </span>
      )}
    </li>
  );
}

function EntryTree() {
  return (
    <div className="flex w-[224px] shrink-0 flex-col border border-[#828790] bg-[#fffdb0] px-px pb-[2px] pt-px">
      <ul className="min-h-0 flex-1 overflow-hidden pl-[2px]">
        {tree.map((node, i) => (
          <TreeRow key={i} node={node} />
        ))}
      </ul>
      <HScroll parts={[0, 18, 82]} />
    </div>
  );
}

const RELEASE = 'nur an Verteiler';
const NOBODY = 'Noch keine Verteiler';

const entries: string[][] = [
  ['Protokolleintra', '2', 'NIEDRIGE PRIORITÄT: Ort: Außenans', ' 25.12.2023', '', '4', RELEASE, NOBODY, ''],
  ['Protokolleintra', '0', 'NIEDRIGE PRIORITÄT: Ort: Innenansic', '', '', '4', RELEASE, NOBODY, ''],
  ['Protokolleintra', '0', 'NIEDRIGE PRIORITÄT: Ort: Innenansic', '', '', '4', RELEASE, NOBODY, ''],
  ['Protokolleintra', '0', 'NIEDRIGE PRIORITÄT: Ort: Dachtraufe', '', '', '1', RELEASE, NOBODY, ''],
  ['Mangel', 'neu', 'Ort: Dachtraufen / Belüftung, Einflugs', '0,00 € /  / erfasst', '', '2', RELEASE, NOBODY, 'erfasst'],
  ['Mangel', 'neu', 'Ort: DG, Treppenhaus / Absturzsiche', '0,00 € /  / erfasst mit Frist', '', '1', RELEASE, NOBODY, 'erfasst mit Fri'],
  ['Protokolleintra', '0', 'NIEDRIGE PRIORITÄT: Ort: EG, Innenw', 'Sonstige(r) Beteiligte(r)', '', '2', RELEASE, NOBODY, ''],
  ['Protokolleintra', '0', 'DRINGEND ZU ERLEDIGEN: text', '', '', '0', '', NOBODY, ''],
  ['Protokolleintra', '0', 'DRINGEND ZU ERLEDIGEN: Test1234', '', '', '0', '', NOBODY, ''],
];

function EntryTable() {
  const th = 'h-6 border-r border-[#e5e5e5] p-0 pl-[6px] text-left font-normal whitespace-nowrap';
  const td = 'h-[21px] border-r p-0 pb-[2px] leading-[19px]';
  return (
    <div className="flex h-[219px] shrink-0 flex-col border border-[#828790] px-px pb-[2px] pt-px">
      <div className="mb-px flex min-h-0 flex-1 overflow-hidden">
        <table className="w-full min-w-0 flex-1 table-fixed border-separate border-spacing-0">
          <colgroup>
            <col className="w-5" />
            <col className="w-[93px]" />
            <col className="w-[77px]" />
            <col className="w-[184px]" />
            <col className="w-[143px]" />
            <col className="w-[109px]" />
            <col className="w-[23px]" />
            <col className="w-[92px]" />
            <col className="w-[165px]" />
            <col />
          </colgroup>
          <thead>
            <tr>
              <th className="p-0">
                <Sorter />
              </th>
              {['Klasse', 'Status', 'Beschreibung', 'Details', 'Vorgang', 'D', 'Freigabe', 'Verteiler'].map((text) => (
                <th key={text} className={th}>
                  {text}
                </th>
              ))}
              <th className="p-0 pl-[6px] text-left font-normal whitespace-nowrap">Bearbeitungsstat</th>
            </tr>
          </thead>
          <tbody>
            {entries.map((row, r) => (
              <tr key={r} className={clsx(r === 0 && 'bg-[#e6e6e6]', r === 7 && 'bg-[#edf5fc]')}>
                <td
                  className={clsx('h-[21px] p-0', r === 0 && 'bg-[#d9d9d9]', r === 7 && 'border border-[#707070] bg-white')}
                />
                {row.map((text, c) =>
                  c === 0 ? (
                    <td key={c} className="h-[21px] border-r border-[#ebebeb] p-0">
                      <div
                        className={clsx(
                          'flex h-[21px] items-center gap-[2px] overflow-hidden border pl-[2px] whitespace-nowrap',
                          r === 0 ? 'border-[#a0a0a0] bg-[#fbfbfb]' : 'border-transparent',
                        )}
                      >
                        <Icon name="folderCheck" />
                        <span className="pb-[2px]">{text}</span>
                      </div>
                    </td>
                  ) : (
                    <td
                      key={c}
                      className={clsx(
                        td,
                        c === 1 ? 'border-[#b8b8b0]' : 'border-[#ebebeb]',
                        c === 5 ? 'text-center' : 'pl-[3px]',
                      )}
                    >
                      <div className="overflow-hidden whitespace-pre">{text}</div>
                    </td>
                  ),
                )}
              </tr>
            ))}
          </tbody>
        </table>
        <div className="flex w-4 shrink-0 flex-col">
          <div className="h-6" />
          <VScroll parts={[41, 41, 42]} ends />
        </div>
      </div>
      <HScroll parts={[0, 75, 25]} ends />
    </div>
  );
}

const description = [
  'Ort: Außenansichten / Allgemeiner Bautenstand',
  'Die Massivbauarbeiten sind fertiggestellt',
  'worden.Der Dachstuhl ist gerichtet',
  'worden.Das Dach ist vollständig eingedeckt',
  'worden.Die Fenster sind eingesetzt worden.',
  'Das Dach ist vollständig gedämmt und die',
  'Dampfbremsfolien eingelegt und verklebt',
  'worden. Mit dem Aufstellen der',
  'Trockenbauwände ist begonnen worden.Der',
  'Fassadenputz ist aufgebracht worden.Mit den',
  'Rohbauarbeiten des Elektrogewerks ist',
  'begonnen worden.',
].join('\n');

function DetailForm() {
  const date = clsx(FIELD, 'h-[25px] w-[65px] pb-[7px] pl-1');
  return (
    <div className="flex w-[357px] shrink-0 flex-col gap-[3px] pb-[3px]">
      <div className="flex h-[22px] items-center">
        <label htmlFor="priority" className="w-[81px]">
          Klassifizierung:
        </label>
        <Dropdown id="priority" value="Niedrige Priorität" className="w-[254px]" />
      </div>
      <div className="flex min-h-0 flex-1">
        <label htmlFor="description" className="w-[79px] pt-[6px]">
          Beschreibung:
        </label>
        <div className={clsx(FIELD, 'flex w-64 p-px')}>
          <textarea
            id="description"
            defaultValue={description}
            className="min-w-0 flex-1 resize-none overflow-hidden pl-[3px] leading-[14px] whitespace-pre outline-none"
          />
          <div className="flex w-4 shrink-0 flex-col">
            <VScroll parts={[1, 0, 0]} disabled />
          </div>
        </div>
        <IconButton name="pencil" label="Beschreibung bearbeiten" className="ml-[5px] mt-[5px]" />
      </div>
      <div className="flex h-[25px] items-center">
        <label htmlFor="responsible" className="w-[79px] pb-1">
          Verantwortlich:
        </label>
        <input id="responsible" className={clsx(FIELD, 'h-[25px] w-64')} />
        <IconButton name="calTable" label="Verantwortlichen wählen" className="ml-[5px]" />
      </div>
      <div className="flex">
        <div className="flex w-[79px] flex-col gap-[3px] leading-[18px]">
          <label htmlFor="due" className="h-[25px]">
            Frist:
          </label>
          <label htmlFor="done" className="h-[25px]">
            Erledigt:
          </label>
        </div>
        <div className="flex flex-col gap-[3px]">
          <input id="due" defaultValue="25.12.2023" className={date} />
          <input id="done" defaultValue="29.12.2023" className={date} />
        </div>
        <div className="ml-[3px] flex flex-col gap-[3px]">
          <div className="flex h-[25px] items-center pl-1">
            <IconButton name="calClock" label="Datum wählen" />
          </div>
          <input aria-label="Erledigt von" defaultValue="Boeker" className={clsx(FIELD, 'h-[25px] w-[65px] pb-[3px] pl-[3px]')} />
        </div>
        <textarea aria-label="Bemerkung" className={clsx(FIELD, 'ml-1 h-[53px] w-[119px] resize-none')} />
        <IconButton name="pencil" label="Bemerkung bearbeiten" className="ml-[5px] mt-[6px]" />
      </div>
    </div>
  );
}

const pictures = ['Pic2081053', 'Pic2081054', 'Pic2081055', 'Pic2081056'];

function PictureTable() {
  const th = 'h-[25px] border-r border-[#e5e5e5] p-0 pl-[6px] text-left font-normal whitespace-nowrap';
  const td = 'h-[21px] border-b border-r border-b-[#ececec] p-0 pb-[2px] pl-[3px] leading-[18px] whitespace-nowrap';
  return (
    <div className="flex w-[567px] shrink-0 flex-col border border-[#828790] px-px pb-[2px]">
      <div className="flex min-h-0 flex-1 overflow-hidden">
        <div className="min-w-0 flex-1">
          <table className="w-full table-fixed border-separate border-spacing-0">
            <colgroup>
              <col className="w-5" />
              <col className="w-[61px]" />
              <col className="w-[116px]" />
              <col className="w-32" />
              <col className="w-[92px]" />
              <col className="w-6" />
              <col className="w-[49px]" />
              <col />
            </colgroup>
            <thead>
              <tr>
                <th className="p-0">
                  <Sorter />
                </th>
                {['Klasse', 'Name', 'Beschreibung', 'Datum'].map((text) => (
                  <th key={text} className={th}>
                    {text}
                  </th>
                ))}
                <th className="border-r border-[#e5e5e5] p-0 text-center font-normal">E</th>
                <th className={th}>EA</th>
                <th className="p-0 pl-[6px] text-left font-normal whitespace-nowrap">1. Adresse</th>
              </tr>
            </thead>
            <tbody>
              {pictures.map((name, i) => (
                <tr key={name} className={clsx(i === 0 && 'bg-[#e6e6e6]')}>
                  <td className={clsx('h-[21px] p-0', i === 0 && 'bg-[#d9d9d9]')} />
                  <td className="h-[21px] border-b border-r border-[#ececec] p-0">
                    <div
                      className={clsx(
                        'flex h-5 items-center gap-1 border pl-[2px]',
                        i === 0 ? 'border-[#a0a0a0] bg-[#fbfbfb]' : 'border-transparent',
                      )}
                    >
                      <Icon name="picture" />
                      <span className="pb-[2px]">Bild</span>
                    </div>
                  </td>
                  <td className={clsx(td, 'border-r-[#c8c8c0]')}>{name}</td>
                  <td className={clsx(td, 'border-r-[#c8c8c0]')} />
                  <td className={clsx(td, 'border-r-[#707070]')}>01.12.2023 07:29</td>
                  <td className={clsx(td, 'border-r-[#707070] pr-[3px] text-center')}>0</td>
                  <td className="h-[21px] border-b border-r border-b-[#ececec] border-r-[#c8c8c0] p-0">
                    <div className="flex h-5 items-center gap-[3px] pl-1">
                      <Icon name="error" />
                      <span className="pb-[2px]">Nein</span>
                    </div>
                  </td>
                  <td className="h-[21px] border-b border-[#ececec] p-0" />
                </tr>
              ))}
            </tbody>
          </table>
        </div>
        <div className="flex w-4 shrink-0 flex-col">
          <div className="h-[25px]" />
          <VScroll parts={[80, 79, 80]} ends />
        </div>
      </div>
      <HScroll parts={[0, 80, 20]} ends />
    </div>
  );
}

function Attachments() {
  const button = 'h-[19px] border border-[#adadad] bg-[#e1e1e1] leading-[17px]';
  return (
    <div className="ml-[15px] flex flex-col">
      <div className="flex h-[22px] items-center pl-[3px]">
        <label htmlFor="release" className="w-[67px]">
          Freigabe:
        </label>
        <Dropdown id="release" value="nur an Verteiler" className="w-[190px]" />
        <label htmlFor="created" className="ml-[17px] w-[50px] pb-1">
          Erstellt:
        </label>
        <input id="created" defaultValue="Boeker / 01.12.2023 07:29" className={clsx(FIELD, 'h-[22px] w-[213px] pb-[2px] pl-[6px]')} />
      </div>
      <div className="mt-[3px] flex h-6 items-center pl-px">
        <label htmlFor="receivers" className="w-[69px] pb-1">
          Verteiler:
        </label>
        <input id="receivers" defaultValue="Noch keine Verteiler" className={clsx(FIELD, 'h-6 w-[470px] pb-[2px] pl-[3px]')} />
        <IconButton name="addList" label="Verteiler hinzufügen" className="ml-[7px]" />
        <IconButton name="redX" label="Verteiler entfernen" className="ml-[10px]" />
      </div>
      <div className="mt-[6px] flex min-h-0 flex-1 gap-[6px]">
        <PictureTable />
        <div className="flex flex-col gap-4 pt-1">
          <IconButton name="doc" label="Bild öffnen" />
          <IconButton name="redX" label="Bild löschen" />
        </div>
      </div>
      <div className="mt-1 flex w-[567px] justify-end gap-[5px]">
        <button type="button" className={clsx(button, 'w-[131px]')}>
          Vorschau (Modal)
        </button>
        <button type="button" className={clsx(button, 'w-[133px]')}>
          Dokument hinzufügen
        </button>
        <button type="button" className={clsx(button, 'w-[108px]')}>
          Alle freigeben
        </button>
      </div>
    </div>
  );
}

function DiaryPage() {
  return (
    <div className="mb-[3px] ml-[2px] flex min-h-0 flex-1 flex-col border-b border-l border-[#dcdcdc] bg-white pb-1 pl-[5px] pr-px pt-[3px]">
      <div className="flex min-h-0 flex-1 flex-col border border-[#a0a0a0] pb-[2px] pl-[2px] pr-[3px]">
        <EntryBar />
        <div className="flex min-h-0 flex-1 border border-[#a0a0a0] pb-px pl-px pt-[2px]">
          <EntryTree />
          <div className="ml-px flex w-[996px] shrink-0 flex-col gap-[5px]">
            <EntryTable />
            <div className="flex min-h-0 flex-1 border border-[#a0a0a0] pb-[3px] pl-3 pt-3">
              <DetailForm />
              <Attachments />
            </div>
          </div>
          <div className="ml-[5px] flex flex-col gap-[9px] pt-1">
            <IconButton name="addList" label="Zeile hinzufügen" />
            <IconButton name="copy" label="Zeile kopieren" />
            <IconButton name="redX" label="Zeile löschen" />
          </div>
        </div>
      </div>
    </div>
  );
}

/* ---------- action sidebar ---------- */

const actions = [
  'Projekt öffnen...',
  'Neuer Projekteintrag...',
  'Neues Dokument...',
  'Bestehendes Dokument...',
  'Anzeigen...',
  'Mitteilungen...',
  'Funktionen...',
];

function Action({ text, menu: hasMenu = true }: { text: string; menu?: boolean }) {
  return (
    <button type="button" className="flex h-[22px] w-full items-center">
      <span className="w-[130px] text-center whitespace-nowrap">{text}</span>
      {hasMenu && (
        <svg viewBox="0 0 7 4" className="ml-[5px] h-1 w-[7px]" aria-hidden="true">
          <path d="M0 0h7L3.500 4z" fill="#111" />
        </svg>
      )}
    </button>
  );
}

function Sidebar() {
  return (
    <aside className="mt-px flex w-[148px] shrink-0 flex-col border-l border-t border-[#a0a0a0] border-r border-r-[#c8c8c8] pt-px">
      {actions.map((text) => (
        <Action key={text} text={text} menu={!text.startsWith('Neuer')} />
      ))}
      <hr className="mx-[2px] mt-[2px] mb-[5px] border-[#808080]" />
      <Action text="Aktionen" />
      <div className="mt-[190px] ml-[70px] flex h-[31px] w-[58px] items-center justify-between bg-white pl-2 pr-px text-sm text-[#8c8ca4]">
        4
        <button type="button" aria-label="Ablage leeren" className="flex size-[19px] items-center justify-center bg-[#e5e5e5]">
          <svg viewBox="0 0 8 8" className="size-2" stroke="#fff" strokeWidth="1.800">
            <path d="M1.500 1.500l5 5M6.500 1.500l-5 5" />
          </svg>
        </button>
      </div>
      <svg viewBox="0 0 42 48" className="ml-[77px] mt-[5px] h-12 w-[42px]" aria-hidden="true">
        <path d="M22 42L42 30 36 39 24 45z" fill="#cfcfcf" />
        <path d="M2 1l27 4v22l2 1v11l-14 4z" fill="#e3ca62" stroke="#d8bd55" />
        <path d="M10 4l18 2v33l-10 3z" fill="#cdb14a" />
        <path d="M15 6l12 1v31l-10 3z" fill="#e8d27a" />
        <path d="M2 1l9 7v38L2 38z" fill="#f8e78f" stroke="#dcc45e" />
        <path d="M11 8l1-1v22l-1 17z" fill="#fdf6c4" />
        <path d="M28 28h3v11l-3 1z" fill="#fffbe0" stroke="#c8b050" strokeWidth=".6" />
        <path d="M29 36h2v2h-2z" fill="#4a8fc8" />
      </svg>
    </aside>
  );
}

/* ---------- bottom bars ---------- */

const windowTabs = [
  ['docs', 'Dokumente'],
  ['calendar', 'Kalender'],
  ['gantt', 'Projekte'],
  ['cubes', 'Fremdüberwac...'],
  ['cubes', 'Bautagebuch A...'],
  ['cubes', 'Kundenservice'],
  ['tag', 'Gruppen'],
  ['cubes', 'Systemeinstellu...'],
  ['cubes', 'Mandanten-Ein...'],
];

function WindowTabs() {
  return (
    <nav className="flex h-[26px] shrink-0 items-center border-b border-[#d7d7d7] bg-white pl-[2px]">
      {windowTabs.map(([icon, text]) => (
        <button
          key={text}
          type="button"
          className={clsx(
            'flex h-[21px] w-[120px] items-center gap-1 border pl-[2px] whitespace-nowrap',
            text === 'Projekte' ? 'border-[#99d1ff] bg-[#cce8ff]' : 'border-transparent',
          )}
        >
          <Icon name={icon} />
          {text}
        </button>
      ))}
    </nav>
  );
}

const statusCells: [string, string][] = [
  ['', 'w-5'],
  ['', 'w-5'],
  ['', 'w-[50px]'],
  ['', 'w-[50px]'],
  ['2K', 'w-[30px] text-center'],
  ['0E', 'w-[30px] text-center'],
  ['2D', 'w-[30px] text-center'],
  ['3V', 'w-[30px] text-center'],
  ['', 'w-[30px]'],
  ['Mandant: 1 swp-Bau GmbH', 'w-[250px] pl-1'],
];

function StatusBar() {
  return (
    <footer className="flex h-[23px] shrink-0 items-stretch bg-[#f0f0f0] pt-px leading-[22px]">
      {statusCells.map(([text, style], i) => (
        <span key={i} className={clsx('border-r border-[#d7d7d7]', style)}>
          {text}
        </span>
      ))}
    </footer>
  );
}

export default function App() {
  return (
    <div className={clsx('flex h-screen flex-col overflow-hidden bg-white text-[11px] text-black', UI)}>
      <TitleBar />
      <MenuBar />
      <Toolbar />
      <SearchRow />
      <ProjectList />
      <main className={clsx('flex min-h-0 flex-1 flex-col bg-[#f0f0f0] pt-2', SANS)}>
        <div className="flex min-h-0 flex-1 border border-[#a0a0a0] border-r-transparent">
          <div className="flex min-w-0 flex-1 flex-col pt-[10px]">
            <StatusChips />
            <TabStrip />
            <DiaryPage />
          </div>
          <Sidebar />
        </div>
      </main>
      <WindowTabs />
      <StatusBar />
    </div>
  );
}
